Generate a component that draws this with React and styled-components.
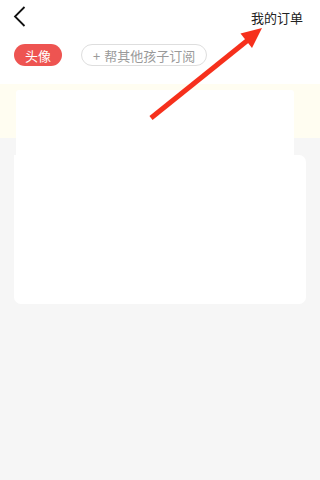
import React from "react";
import styled, { createGlobalStyle } from "styled-components";

const Global = createGlobalStyle`
  html, body { margin: 0; padding: 0; background: #f6f6f6; }
  body { font-family: "Noto Sans CJK SC", "Noto Sans", sans-serif; }
  * { box-sizing: border-box; }
`;

const Page = styled.div`
  position: relative;
  width: 320px;
  min-height: 480px;
  background: #f6f6f6;
  overflow: hidden;
`;

const Header = styled.div`
  background: #fff;
  padding-bottom: 18px;
`;

const NavBar = styled.div`
  height: 33px;
  display: flex;
  align-items: center;
  justify-content: space-between;
  padding: 0 17px 0 13px;
`;

const BackButton = styled.button`
  border: 0;
  background: none;
  padding: 0;
  width: 16px;
  height: 24px;
  display: flex;
  align-items: center;
  cursor: pointer;
`;

const NavTitle = styled.span`
  font-size: 13px;
  color: #222;
  line-height: 1;
  margin-top: 1px;
`;

const TagRow = styled.div`
  display: flex;
  gap: 19px;
  padding: 11px 14px 0;
`;

const Pill = styled.span`
  height: 22px;
  display: inline-flex;
  align-items: center;
  border-radius: 11px;
  font-size: 13px;
  line-height: 1;
  padding: ${(p) => (p.$active ? "0 11px" : "0 11px 0 11px")};
  background: ${(p) => (p.$active ? "#ee5451" : "#fff")};
  color: ${(p) => (p.$active ? "#fff" : "#9a9a9a")};
  border: ${(p) => (p.$active ? "none" : "1px solid #dedede")};
  gap: 4px;
`;

const Body = styled.div`
  padding-top: 6px;
  background: linear-gradient(to bottom, #fffdf1 0, #fffdf1 54px, #f6f6f6 54px);
`;

const TopBlock = styled.div`
  height: 65px;
  margin: 0 26px 0 16px;
  background: #fff;
  border-radius: 3px 3px 0 0;
`;

const Card = styled.div`
  height: 149px;
  margin: 0 14px;
  background: #fff;
  border-radius: 0 7px 7px 7px;
`;

const ArrowLayer = styled.svg`
  position: absolute;
  left: 0;
  top: 0;
  pointer-events: none;
`;

export default function App() {
  return (
    <Page>
      <Global />
      <Header>
        <NavBar>
          <BackButton aria-label="back">
            <svg width="14" height="22" viewBox="0 0 14 22">
              <path d="M11.5 1 L2 10.5 L11.5 20" fill="none" stroke="#111" strokeWidth="1.8" />
            </svg>
          </BackButton>
          <NavTitle>我的订单</NavTitle>
        </NavBar>
        <TagRow>
          <Pill $active>头像</Pill>
          <Pill>
            <span>+</span>
            <span>帮其他孩子订阅</span>
          </Pill>
        </TagRow>
      </Header>
      <Body>
        <TopBlock />
        <Card />
      </Body>
      <ArrowLayer width="320" height="480" viewBox="0 0 320 480">
        <line x1="151" y1="118" x2="248" y2="40" stroke="#f6301c" strokeWidth="5" />
        <polygon points="262,28 252,48 240.5,33.5" fill="#f6301c" />
      </ArrowLayer>
    </Page>
  );
}
